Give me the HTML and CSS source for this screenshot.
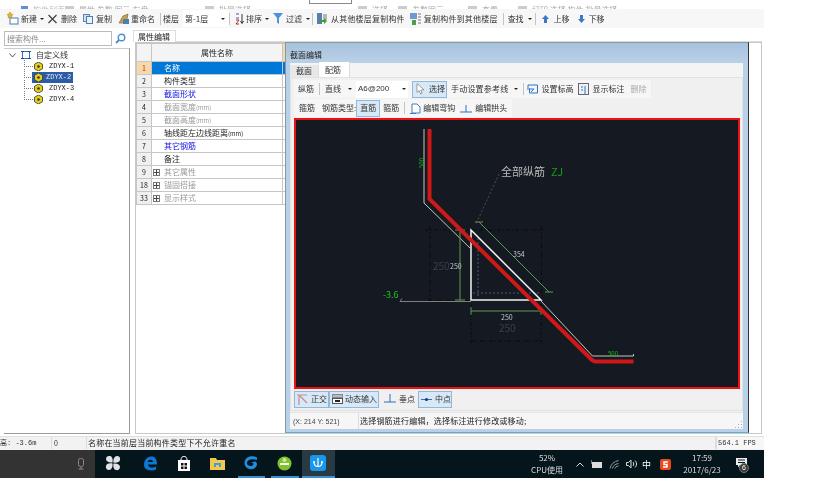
FILE: index.html
```html
<!DOCTYPE html>
<html lang="zh">
<head>
<meta charset="utf-8">
<title>截面编辑</title>
<link rel="stylesheet" href="styles.css">
</head>
<body>
<div class="app">
  <div class="topstrip">
    <span class="frag w1"><i class="fragicon blue"></i>构件列表</span>
    <span class="frag w2"><i class="fragicon"></i>属性 参数 图元 存盘</span>
    <span class="frag w3"><i class="fragicon"></i>批量选择</span>
    <span class="fragbox"></span>
    <span class="frag w4"><i class="fragicon"></i>选择</span>
    <span class="frag w5"><i class="fragicon"></i>参数图元</span>
    <span class="frag w6"><i class="fragicon"></i>查看</span>
    <span class="frag w7"><i class="fragicon"></i>打印 选择 构件 批量选择</span>
  </div>

  <div class="toolbar">
    <span class="tool t-new"><svg width="12" height="13" viewBox="0 0 12 13"><rect x="3" y="6" width="8" height="6" fill="#fff" stroke="#4a7fb5"/><path d="M3 0l1 2 2 .5-1.500 1.500.5 2-2-1-2 1 .5-2L0 2.500 2 2z" fill="#e8b820" stroke="#a87c10" stroke-width=".5"/></svg>新建<b class="caret"></b></span>
    <span class="tool t-del"><svg width="9" height="10" viewBox="0 0 9 10"><path d="M.5 1l8 8M8.500 1l-8 8" stroke="#444" stroke-width="1.300"/></svg>删除</span>
    <span class="tool t-copy"><svg width="10" height="10" viewBox="0 0 10 10"><rect x=".5" y=".5" width="6" height="7" fill="#cfe0f2" stroke="#5a86b5"/><rect x="3.500" y="2.500" width="6" height="7" fill="#e9f1fa" stroke="#4a7fb5"/></svg>复制</span>
    <span class="tool t-ren"><svg width="11" height="11" viewBox="0 0 11 11"><path d="M1 10l4-7 5-2-1 5-4 4z" fill="#c9a44a" stroke="#7a6a3a" stroke-width=".7"/><rect x="5" y="6" width="6" height="5" fill="#4a7fb5"/></svg>重命名</span>
    <span class="sep"></span>
    <span class="tool t-floor">楼层<span class="combo floorcombo">第-1层<b class="caret"></b></span></span>
    <span class="sep"></span>
    <span class="tool t-sort"><svg width="11" height="12" viewBox="0 0 11 12"><path d="M3 1h3M3 5h3" stroke="#2a62a8"/><path d="M3 7h3l-3 4h3" fill="none" stroke="#b03030"/><path d="M9 1v9M7.500 8l1.500 2.500L10.500 8" fill="none" stroke="#333"/></svg>排序<b class="caret"></b></span>
    <span class="tool t-filter"><svg width="10" height="11" viewBox="0 0 10 11"><path d="M0 0h10L6 5v6L4 9.500V5z" fill="#4d93d6"/></svg>过滤<b class="caret"></b></span>
    <span class="sep"></span>
    <span class="tool t-from"><svg width="11" height="12" viewBox="0 0 11 12"><rect x="0" y="0" width="5" height="11" fill="#5a7ea8"/><path d="M6 2h4M6 4h4M6 6h4" stroke="#777"/><path d="M3 7h4v-2l3 3-3 3V9H3z" fill="#3aa03a"/></svg>从其他楼层复制构件</span>
    <span class="tool t-to"><svg width="11" height="12" viewBox="0 0 11 12"><rect x="0" y="0" width="7" height="6" fill="#6f9ad0"/><path d="M8 1h3M8 4h3M8 7h3M8 10h3" stroke="#777"/><path d="M2 7h4v5H2z" fill="#4aa04a"/></svg>复制构件到其他楼层</span>
    <span class="sep"></span>
    <span class="tool t-find">查找<b class="caret"></b></span>
    <span class="sep"></span>
    <span class="tool t-up"><svg width="7" height="8" viewBox="0 0 7 8"><path d="M3.500 0L7 4H5v4H2V4H0z" fill="#3a78c8"/></svg>上移</span>
    <span class="tool t-down"><svg width="7" height="8" viewBox="0 0 7 8"><path d="M3.500 8L7 4H5V0H2v4H0z" fill="#3a78c8"/></svg>下移</span>
  </div>

  <div class="main">
    <aside class="left">
      <div class="search">
        <span class="search-input">搜索构件...</span>
        <svg class="search-icon" width="11" height="11" viewBox="0 0 11 11"><circle cx="6.500" cy="4.500" r="3.300" fill="none" stroke="#4b8fd0" stroke-width="1.400"/><path d="M4 7L1 10" stroke="#4b8fd0" stroke-width="1.800"/></svg>
      </div>
      <div class="tree">
        <div class="node root">
          <svg class="chev" width="7" height="5" viewBox="0 0 7 5"><path d="M.5.500L3.500 4 6.500.500" fill="none" stroke="#555"/></svg>
          <svg width="10" height="10" viewBox="0 0 10 10"><rect x="1.500" y="1.500" width="7" height="7" fill="none" stroke="#2f6fc0" stroke-width="1"/><path d="M0 1.500h3M7 1.500h3M0 8.500h3M7 8.500h3" stroke="#1a4f90"/></svg>
          <span>自定义线</span>
        </div>
        <div class="node child"><i class="line"></i><svg class="hex" width="9" height="9" viewBox="0 0 9 9"><path d="M4.500 0L8.500 2.200v4.600L4.500 9 .5 6.800V2.200z" fill="#e3cf1a" stroke="#333" stroke-width=".8"/><circle cx="4.500" cy="4.500" r="1.300" fill="#333"/></svg><span class="code">ZDYX-1</span></div>
        <div class="node child sel"><i class="line"></i><span class="selbox"><svg class="hex" width="9" height="9" viewBox="0 0 9 9"><path d="M4.500 0L8.500 2.200v4.600L4.500 9 .5 6.800V2.200z" fill="#e3cf1a" stroke="#333" stroke-width=".8"/><circle cx="4.500" cy="4.500" r="1.300" fill="#333"/></svg><span class="code">ZDYX-2</span></span></div>
        <div class="node child"><i class="line"></i><svg class="hex" width="9" height="9" viewBox="0 0 9 9"><path d="M4.500 0L8.500 2.200v4.600L4.500 9 .5 6.800V2.200z" fill="#e3cf1a" stroke="#333" stroke-width=".8"/><circle cx="4.500" cy="4.500" r="1.300" fill="#333"/></svg><span class="code">ZDYX-3</span></div>
        <div class="node child"><i class="line"></i><svg class="hex" width="9" height="9" viewBox="0 0 9 9"><path d="M4.500 0L8.500 2.200v4.600L4.500 9 .5 6.800V2.200z" fill="#e3cf1a" stroke="#333" stroke-width=".8"/><circle cx="4.500" cy="4.500" r="1.300" fill="#333"/></svg><span class="code">ZDYX-4</span></div>
      </div>
    </aside>
    <section class="right">
      <div class="tabs"><span class="tab">属性编辑</span></div>
      <div class="sheet">
        <table class="grid">
          <colgroup><col class="c0"><col class="c1"><col class="c2"></colgroup>
          <tr class="head"><th></th><th>属性名称</th><th class="hv"></th></tr>
          <tr class="on"><td class="n">1</td><td>名称</td><td></td></tr>
          <tr><td class="n">2</td><td>构件类型</td><td></td></tr>
          <tr><td class="n">3</td><td class="blue">截面形状</td><td></td></tr>
          <tr><td class="n">4</td><td class="grey">截面宽度<span class="unit">(mm)</span></td><td></td></tr>
          <tr><td class="n">5</td><td class="grey">截面高度<span class="unit">(mm)</span></td><td></td></tr>
          <tr><td class="n">6</td><td>轴线距左边线距离<span class="unit">(mm)</span></td><td></td></tr>
          <tr><td class="n">7</td><td class="blue">其它钢筋</td><td></td></tr>
          <tr><td class="n">8</td><td>备注</td><td></td></tr>
          <tr><td class="n">9</td><td class="grey"><i class="plus"></i>其它属性</td><td></td></tr>
          <tr><td class="n">18</td><td class="grey"><i class="plus"></i>锚固搭接</td><td></td></tr>
          <tr><td class="n">33</td><td class="grey"><i class="plus"></i>显示样式</td><td></td></tr>
        </table>
      </div>
    </section>
  </div>

  <div class="status">
    <span class="st a">高: -3.6m</span>
    <span class="st b">0</span>
    <span class="st c">名称在当前层当前构件类型下不允许重名</span>
    <span class="st d">564.1 FPS</span>
  </div>

  <div class="taskbar">
    <div class="tb-search"><svg width="8" height="12" viewBox="0 0 8 12"><rect x="1.500" y="0.500" width="5" height="8" rx="2" fill="none" stroke="#8a8a8a"/><path d="M4 9v2M1.500 11h5" stroke="#8a8a8a"/></svg></div>
    <div class="tb-apps">
      <span class="app-i fan"><svg width="16" height="16" viewBox="0 0 16 16"><g fill="#dfe3e6"><path d="M7.500 7.500C4 8 1 6.500 1 4c0-2.500 2-3.500 4-3 2.500.5 3 3.500 2.500 6.500z"/><path d="M8.500 7.500C8 4 9.500 1 12 1c2.500 0 3.500 2 3 4-.5 2.500-3.500 3-6.500 2.500z"/><path d="M8.500 8.500C12 8 15 9.500 15 12c0 2.500-2 3.500-4 3-2.500-.5-3-3.500-2.500-6.500z"/><path d="M7.500 8.500C8 12 6.500 15 4 15c-2.500 0-3.500-2-3-4 .5-2.500 3.500-3 6.500-2.500z"/></g></svg></span>
      <span class="app-i"><svg width="15" height="15" viewBox="0 0 15 15"><path d="M1 9C1 3 5 .5 8.500 .5 12 .5 14 3 14 8.500H5c.5 3.500 5 4 8 2v3c-4 2-12 1-12-4.500zM5 6h5c0-3-5-3-5 0z" fill="#0a78d4"/></svg></span>
      <span class="app-i"><svg width="14" height="15" viewBox="0 0 14 15"><path d="M1 4h12v11H1z" fill="#fff"/><path d="M4 4c0-5 6-5 6 0" fill="none" stroke="#fff"/><path d="M4 7h2.500v2.500H4zM7.500 7H10v2.500H7.500zM4 10.500h2.500V13H4zM7.500 10.500H10V13H7.500z" fill="#111"/></svg></span>
      <span class="app-i"><svg width="15" height="13" viewBox="0 0 15 13"><path d="M0 1h6l1 2h8v10H0z" fill="#f2c94c"/><path d="M4 6h7v4H9V8H6v2H4z" fill="#3a9fe0"/></svg></span>
      <span class="app-i run"><svg width="17" height="16" viewBox="0 0 17 16"><path d="M14 2.500C8 -.5 1.500 2.500 1.500 8c0 5 6 8 10.500 5 2.500-2 2.500-5 .5-6.500l-5 1c3 0 3.500 1.500 2 3-3 1.500-6-.5-5.500-3C5 4 10 3.500 14 5z" fill="#1c8fe0"/></svg></span>
      <span class="app-i run"><svg width="15" height="15" viewBox="0 0 15 15"><circle cx="7.500" cy="7.500" r="7" fill="#7cc22c"/><path d="M3 7h9v2H3z" fill="#fff"/><circle cx="7.500" cy="4" r="2" fill="#c9ec86"/></svg></span>
      <span class="app-i run active"><span class="tile"><svg width="14" height="14" viewBox="0 0 14 14"><path d="M7 2v9M3 6c0 3 1.500 4.500 4 4.500S11 9 11 6" fill="none" stroke="#fff" stroke-width="1.200"/><circle cx="3" cy="6" r="1" fill="#fff"/><circle cx="11" cy="6" r="1" fill="#fff"/></svg></span></span>
    </div>
    <div class="tb-cpu"><span>52%</span><span>CPU使用</span></div>
    <div class="tb-tray">
      <svg width="8" height="5" viewBox="0 0 8 5"><path d="M.5 4.500L4 1l3.500 3.500" fill="none" stroke="#ddd"/></svg>
      <svg width="11" height="9" viewBox="0 0 11 9"><path d="M0 0v4" stroke="#ddd"/><rect x="1.500" y="2.500" width="9" height="5" fill="#ddd" stroke="#ddd"/></svg>
      <svg width="10" height="9" viewBox="0 0 10 9"><path d="M1 8.500C2 4 5 1.500 9.500 .5M3.500 8.500C4 6 6 4 9.500 3.500M6 8.500c0-1 1.500-2.500 3.500-2.500" fill="none" stroke="#999"/></svg>
      <svg width="11" height="10" viewBox="0 0 11 10"><path d="M.5 3.500h2L5 1v8L2.500 6.500h-2z" fill="none" stroke="#ddd"/><path d="M7 3c1 1 1 3 0 4M9 1.500c2 2 2 5 0 7" fill="none" stroke="#ddd"/></svg>
      <span class="ime">中</span>
      <svg width="11" height="11" viewBox="0 0 11 11"><rect width="11" height="11" rx="2" fill="#e8481c"/><path d="M8 3H4v2.500h3V8H3" fill="none" stroke="#fff" stroke-width="1.500"/></svg>
    </div>
    <div class="tb-clock"><span>17:59</span><span>2017/6/23</span></div>
    <div class="tb-note">
      <svg width="11" height="10" viewBox="0 0 11 10"><path d="M0 0h11v7H4L2 9.500V7H0z" fill="#eee"/><path d="M2 2h7M2 4.500h7" stroke="#06161c"/></svg>
      <span class="badge">6</span>
    </div>
  </div>

  <div class="dialog">
    <div class="dlg-title">截面编辑</div>
    <div class="dlg-body">
      <div class="dlg-tabs"><span class="dtab">截面</span><span class="dtab on">配筋</span></div>
      <div class="dlg-page">
        <div class="rowwrap r1">
          <span class="ti lab">纵筋</span><span class="sep"></span>
          <span class="ti line-t">直线<b class="caret"></b></span>
          <span class="combo spec">A6@200<b class="caret"></b></span>
          <span class="ti btn pick"><svg width="9" height="12" viewBox="0 0 9 12"><path d="M1 .5v9l2.200-2 1.500 3.500 1.500-.7L4.700 7 8 6.800z" fill="#fff" stroke="#888" stroke-width=".8"/></svg>选择</span>
          <span class="ti manual">手动设置参考线<b class="caret"></b></span>
          <span class="sep"></span>
          <span class="ti level"><svg width="11" height="11" viewBox="0 0 11 11"><path d="M1 4V1h9.500M10.500 1v8h-8V4.500" fill="none" stroke="#2a76c0"/><path d="M0 5h7M4 8l3-3" stroke="#2a76c0"/></svg>设置标高</span>
          <span class="ti show"><svg width="11" height="12" viewBox="0 0 11 12"><rect x=".5" y=".5" width="10" height="11" fill="#eef2f7" stroke="#667"/><path d="M3 4h2M3 7h2M7 3v8" stroke="#2a76c0"/></svg>显示标注</span>
          <span class="ti dis">删除</span>
        </div>
        <div class="rowwrap r2">
          <span class="ti lab">箍筋</span>
          <span class="ti kind">钢筋类型:</span>
          <span class="ti btn straight">直筋</span>
          <span class="ti hoop">箍筋</span>
          <span class="sep"></span>
          <span class="ti hook"><svg width="11" height="11" viewBox="0 0 11 11"><path d="M2 10V1h5l3 3v6z" fill="#fff" stroke="#3a7fc5"/><path d="M0 10.500h6" stroke="#3a7fc5"/></svg>编辑弯钩</span>
          <span class="ti arch"><svg width="12" height="11" viewBox="0 0 12 11"><path d="M0 9h12M6 2v7" stroke="#2a6fc0"/></svg>编辑拱头</span>
        </div>
        <div class="canvas">
          <svg class="draw" viewBox="296 120 442 267" width="442" height="267">
            <path class="d-grid" d="M425 230H543M430 226V300M541.500 226V304M471 341H541M471 304V343M541 304V343M428 300.500H471"/>
            <path class="d-lead" d="M499 174L476 224"/>
            <path class="d-blue" d="M478 238V296M473 293H540"/>
            <path class="d-thin" d="M424 129V203L470 248M541 301L592.500 356H633.500V354"/>
            <path class="d-floor" d="M400 301.500H471M400 301.500l2-3"/>
            <path class="d-dim" d="M460 230V300M455 230H465M455 300H465M471 311H541M471 307V315M541 307V315M479 222L549 292M475 222H483M545 292H553"/>
            <path class="d-tri" d="M471 230V300H541Z"/>
            <path class="d-red" d="M429.500 129V199L592 360L595 361.500H633.500"/>
            <text class="t-g" transform="translate(424 168) rotate(-90)">500</text>
            <text class="t-big" x="433" y="270">250</text>
            <text class="t-sm" x="450" y="269">250</text>
            <text class="t-sm" x="513" y="257">354</text>
            <text class="t-sm" x="501" y="320">250</text>
            <text class="t-big" x="499" y="332">250</text>
            <text class="t-g" x="608" y="356">500</text>
            <text class="t-el" x="383" y="298">-3.6</text>
            <text class="t-lab" x="501" y="176">全部纵筋<tspan class="t-zj" dx="6">ZJ</tspan></text>
          </svg>
        </div>
        <div class="rowwrap r3">
          <span class="ti btn ortho"><svg width="11" height="11" viewBox="0 0 11 11"><path d="M0 1h10M2 1v10M3 2l7 7" stroke="#c98a8a" stroke-width="1.200" fill="none"/></svg>正交</span>
          <span class="ti btn dyn"><svg width="11" height="10" viewBox="0 0 11 10"><rect x=".5" y=".5" width="10" height="3" fill="#bbb" stroke="#888"/><rect x=".5" y="4.500" width="10" height="5" fill="#fff" stroke="#555"/><path d="M3 7h5" stroke="#222" stroke-width="2"/></svg>动态输入</span>
          <span class="ti perp"><svg width="12" height="10" viewBox="0 0 12 10"><path d="M0 8h12M6 0v8" stroke="#2a6fc0"/></svg>垂点</span>
          <span class="ti btn mid"><svg width="11" height="5" viewBox="0 0 11 5"><path d="M0 2.500h11" stroke="#2a6fc0"/><circle cx="5.500" cy="2.500" r="1.500" fill="#123a70"/></svg>中点</span>
        </div>
      </div>
      <div class="dlg-status">
        <span class="coord">(X: 214 Y: 521)</span>
        <span class="hint">选择钢筋进行编辑，选择标注进行修改或移动;</span>
        <svg class="grip" width="9" height="9" viewBox="0 0 9 9"><path d="M7 1h1v1H7zM4 4h1v1H4zM7 4h1v1H7zM1 7h1v1H1zM4 7h1v1H4zM7 7h1v1H7z" fill="#aaa"/></svg>
      </div>
    </div>
  </div>
</div>
</body>
</html>
```
FILE: styles.css
```css
* { box-sizing: border-box; }
html, body { margin: 0; padding: 0; background: #fff; }
body { width: 839px; height: 498px; overflow: hidden; font: 8px/1 "Noto Sans CJK SC", "Liberation Sans", sans-serif; color: #333; }
.app { position: relative; width: 764px; height: 478px; display: flex; flex-direction: column; overflow: hidden; background: #f3f3f3; filter: blur(.4px); }
svg { flex: none; display: block; }

.topstrip { height: 9px; flex: none; display: flex; align-items: flex-end; background: #fff; overflow: hidden; padding-left: 21px; position: relative; }
.frag { display: flex; gap: 5px; height: 8px; line-height: 1; color: #aaa; margin-bottom: -5px; flex: none; white-space: nowrap; }
.fragicon { display: block; width: 9px; height: 8px; background: #ccc; }
.fragicon.blue { background: #5b93cf; }
.w1 { color: #bbb; width: 44px; }
.w2 { width: 140px; margin-left: 0; }
.w3 { width: 105px; }
.fragbox { width: 43px; height: 14px; margin-bottom: 5px; border: 1px solid #888; background: #fff; flex: none; margin-left: -1px; }
.w4 { margin-left: 6px; width: 40px; }
.w5 { width: 70px; }
.w6 { width: 50px; }
.w7 { width: 180px; }

.toolbar { height: 19px; flex: none; display: flex; align-items: center; padding-left: 7px; background: #f7f7f7; }
.tool { display: flex; align-items: center; gap: 3px; white-space: nowrap; flex: none; }
.sep { display: block; width: 1px; height: 12px; background: #c4c4c4; flex: none; }
.caret { display: block; width: 0; height: 0; border: 2px solid transparent; border-top: 2.500px solid #222; border-bottom: 0; margin-left: 1px; flex: none; }
.t-new { gap: 2px; margin-right: 4px; }
.t-del { margin-right: 6px; gap: 4px; }
.t-copy { margin-right: 6px; gap: 3px; }
.t-ren { margin-right: 5px; gap: 2px; }
.t-floor { margin-left: 2px; gap: 4px; }
.combo { display: flex; align-items: center; justify-content: space-between; background: #fff; }
.floorcombo { width: 46px; height: 17px; padding: 0 4px 0 2px; }
.t-sort { margin-left: 3px; margin-right: 4px; gap: 2px; }
.t-filter { gap: 3px; margin-right: 2px; }
.t-from { margin-left: 4px; margin-right: 5px; gap: 3px; letter-spacing: .2px; }
.t-to { margin-right: 5px; gap: 3px; letter-spacing: .2px; }
.t-find { margin-left: 4px; margin-right: 3px; }
.t-up { margin-left: 6px; gap: 5px; margin-right: 8px; }
.t-down { gap: 4px; }

.main { flex: 1; min-height: 0; display: flex; background: #fff; border-bottom: 1px solid #e0e0e0; padding-bottom: 2px; }
.left { width: 132px; flex: none; padding: 3px 2px 0 4px; display: flex; flex-direction: column; background: #fff; }
.search { height: 15px; display: flex; align-items: center; flex: none; }
.search-input { width: 108px; height: 15px; border: 1px solid #bbb; padding: 3px 2px; color: #888; }
.search-icon { margin-left: 3px; }
.tree { flex: 1; margin-top: 2px; width: 126px; border: 1px solid #9a9a9a; border-top-color: #ccc; border-left: 0; background: #fff; }
.node { display: flex; align-items: center; height: 11px; }
.root { height: 12px; gap: 5px; padding-left: 5px; }
.child { padding-left: 20px; position: relative; gap: 3px; }
.line { position: absolute; left: 20px; top: -3px; bottom: 5px; width: 9px; border-left: 1px dotted #777; border-bottom: 1px dotted #777; margin-left: 0; display: block; }
.child > .hex { margin-left: 10px; }
.hex { flex: none; }
.code { font: 7px/1 "Liberation Mono", monospace; color: #222; }
.child .code { margin-left: 3px; }
.selbox { display: flex; align-items: center; background: #2b5ca8; height: 11px; padding-right: 2px; margin-left: 8px; padding-left: 2px; }
.selbox .code { color: #e8e8e8; }

.right { flex: 1; display: flex; flex-direction: column; padding: 0 2px 0 1px; background: #fff; }
.tabs { height: 14px; flex: none; display: flex; align-items: flex-end; border-bottom: 1px solid #ddd; padding-top: 2px; }
.tab { width: 43px; height: 12px; padding: 2px 0 0 4px; background: #fff; border: 1px solid #ddd; border-bottom: 0; margin-bottom: -1px; color: #222; }
.sheet { flex: 1; border: 1px solid #c8c8c8; margin-left: 2px; background: #fff; overflow: hidden; }
.grid { border-collapse: collapse; table-layout: fixed; width: 300px; }
.c0 { width: 15px; }
.c1 { width: 131px; }
.grid th, .grid td { border: 1px solid #c6c6c6; height: 13px; padding: 0; font-weight: 400; vertical-align: middle; white-space: nowrap; color: #222; }
.grid th { height: 18px; background: #f4f4f4; text-align: center; }
.grid .hv { background: #f6d9a8; }
.grid td.n { background: #f0f0f0; text-align: center; font-size: 7px; }
.grid td:nth-child(2) { padding-left: 12px; }
.grid .on td { background: #0078d7; color: #fff; }
.grid .on td.n { background: #f8d8a8; color: #a33; }
.grid td.blue { color: #1010e0; }
.grid td.grey { color: #999; }
.unit { font-size: 6px; }
.plus { display: inline-block; position: absolute; width: 7px; height: 7px; margin: 1px 0 0 -11px; border: 1px solid #777; background: linear-gradient(#444, #444) center/5px 1px no-repeat, linear-gradient(#444, #444) center/1px 5px no-repeat, #fff; }

.status { height: 13px; flex: none; display: flex; align-items: flex-start; background: #f2f2f2; }
.st { display: flex; align-items: center; height: 12px; white-space: nowrap; flex: none; border-right: 1px solid #ddd; }
.a { width: 52px; font-size: 7px; font-family: "Liberation Mono", "Noto Sans CJK SC", monospace; }
.b { width: 35px; padding-left: 2px; font-size: 7px; }
.c { flex: 1; padding-left: 1px; color: #222; letter-spacing: .2px; }
.d { width: 48px; font: 7px/1 "Liberation Mono", monospace; padding-left: 1px; border-left: 1px solid #ddd; border-right: 0; background: #f7f7f7; }

.taskbar { height: 28px; flex: none; display: flex; align-items: center; background: #05151c; color: #ddd; position: relative; }
.tb-search { width: 95px; height: 100%; background: #333; display: flex; align-items: center; justify-content: flex-end; padding-right: 10px; }
.tb-apps { display: flex; height: 100%; }
.app-i { width: 33.500px; height: 100%; display: flex; align-items: center; justify-content: center; border-bottom: 2px solid transparent; flex: none; }
.fan { width: 39px; padding-right: 3px; }
.run { border-bottom-color: #3a8fd0; margin: 0 3px; width: 27.500px; }
.active { background: #2a3a42; width: 33.500px; margin: 0; }
.tile { width: 16px; height: 16px; border-radius: 3px; background: #1a96ec; display: flex; align-items: center; justify-content: center; }
.tb-cpu { width: 44px; display: flex; flex-direction: column; align-items: center; gap: 4px; font-size: 8px; position: absolute; left: 525px; }
.tb-tray { position: absolute; left: 576px; display: flex; align-items: center; gap: 7px; }
.ime { font-size: 9px; color: #fff; margin: 0 2px 0 -2px; }
.tb-clock { position: absolute; left: 678px; width: 48px; display: flex; flex-direction: column; align-items: center; gap: 4px; font-size: 8px; }
.tb-note { position: absolute; left: 736px; top: 8px; }
.badge { position: absolute; left: 3px; top: 5px; width: 10px; height: 10px; border-radius: 50%; background: #3a3a3a; border: 1px solid #777; color: #fff; font: 7px/8px "Liberation Sans", sans-serif; text-align: center; }

.dialog { position: absolute; left: 285px; top: 42px; width: 464px; height: 391px; display: flex; flex-direction: column; background: #b9d1e8; border: 1px solid #8b97a3; border-right-color: #333; border-bottom-color: #5fb0cc; }
.dlg-title { height: 20px; flex: none; padding: 8px 0 0 4px; background: linear-gradient(#a7c2dd, #b9d1e8); color: #222; }
.dlg-body { flex: 1; min-height: 0; margin: 0 5px 3px 4px; display: flex; flex-direction: column; background: #f0f0f0; }
.dlg-tabs { height: 14px; flex: none; display: flex; align-items: flex-end; background: #f4f4f4; }
.dtab { height: 12px; width: 29px; padding: 2px 0 0 6px; color: #333; background: #e8e8e8; border-right: 1px solid #ddd; }
.dtab.on { height: 15px; width: 31px; padding-top: 4px; background: #fff; }
.dlg-page { flex: 1; min-height: 0; background: #f0f0f0; padding: 2px 2px 0 3px; display: flex; flex-direction: column; border: 1px solid #e2e2e2; }
.rowwrap { display: flex; align-items: center; flex: none; height: 18px; background: #f6f6f6; white-space: nowrap; }
.ti { display: flex; align-items: center; gap: 3px; flex: none; }
.r1 { width: 357px; padding-left: 4px; }
.r2 { width: 218px; padding-left: 5px; margin-top: 1px; }
.btn { height: 17px; background: #d8e8f6; border: 1px solid #8fb8dc; }
.lab { margin-right: 6px; }
.r1 .lab { margin-right: 5px; }
.r2 .lab { margin-right: 5px; }
.line-t { margin: 0 4px 0 5px; gap: 0; width: 27px; justify-content: space-between; }
.spec { width: 52px; height: 17px; font-family: "Liberation Sans", sans-serif; padding: 0 2px; color: #333; }
.pick { width: 35px; margin-left: 4px; padding-left: 3px; gap: 4px; }
.manual { margin: 0 5px 0 4px; gap: 5px; letter-spacing: .2px; }
.level { margin-left: 3px; margin-right: 5px; }
.show { margin-right: 6px; }
.dis { color: #aaa; }
.kind { margin-left: 2px; margin-right: 0; }
.straight { width: 24px; justify-content: center; }
.hoop { margin: 0 5px 0 3px; }
.hook { margin-left: 5px; margin-right: 5px; gap: 2px; }
.canvas { flex: none; width: 446px; height: 271px; margin: 1px 0 1px; border: 2px solid #ee1111; background: #151922; }
.draw { display: block; font-family: "Noto Sans CJK SC", sans-serif; }
.d-grid { fill: none; stroke: #0a0a0a; stroke-width: 1; stroke-dasharray: 4 2 1 2; }
.d-lead { fill: none; stroke: #4a4e54; stroke-dasharray: 2 2; }
.d-blue { fill: none; stroke: #4a5a78; stroke-width: 1; stroke-dasharray: 2 2; }
.d-thin { fill: none; stroke: #d8d8d0; stroke-width: .9; }
.d-floor { fill: none; stroke: #808080; }
.d-dim { fill: none; stroke: #5f9a4f; stroke-width: 1; }
.d-tri { fill: none; stroke: #f4f4f4; stroke-width: 1.500; }
.d-red { fill: none; stroke: #d01818; stroke-width: 4; }
.t-big { font-size: 10px; fill: #3c4148; }
.t-sm { font-size: 7px; fill: #c4c8cc; }
.t-g { font-size: 6px; fill: #1cbb1c; }
.t-el { font-size: 9px; fill: #15cc15; }
.t-lab { font-size: 11px; fill: #b8b8b8; }
.t-zj { fill: #14a014; }
.r3 { width: 160px; padding-left: 0; background: #f0f0f0; }
.ortho { width: 35px; padding-left: 2px; gap: 3px; }
.dyn { width: 50px; padding-left: 2px; gap: 2px; }
.perp { margin-left: 5px; gap: 3px; }
.mid { width: 34px; margin-left: 3px; padding-left: 2px; gap: 3px; }
.dlg-status { height: 17px; flex: none; display: flex; align-items: center; background: #f6f6f6; border-top: 1px solid #e4e4e4; position: relative; margin-top: 1px; }
.coord { width: 69px; padding-left: 3px; font-family: "Liberation Sans", sans-serif; font-size: 7px; color: #444; border-right: 1px solid #ddd; height: 100%; display: flex; align-items: center; }
.hint { padding-left: 1px; color: #222; letter-spacing: .2px; }
.grip { position: absolute; right: 0; bottom: 0; }
```
